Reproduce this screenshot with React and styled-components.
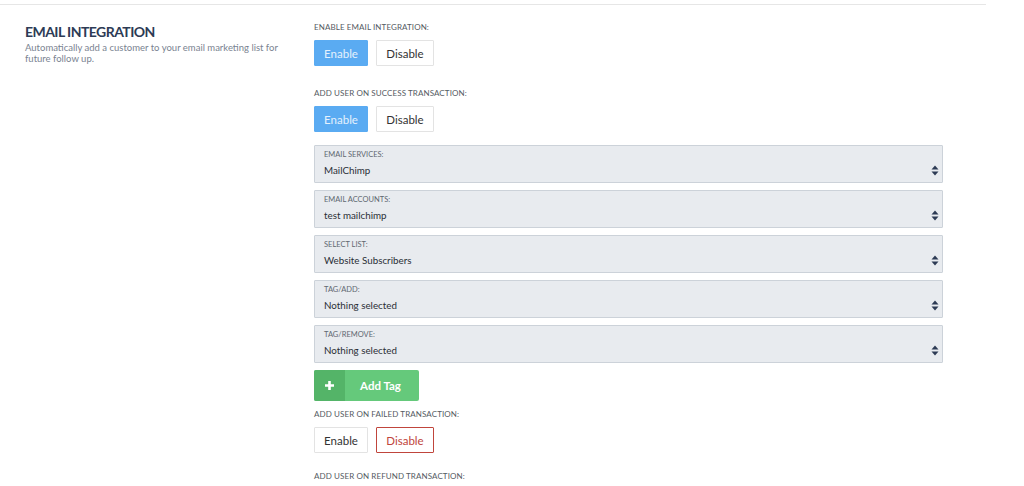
import React from "react";
import styled, { createGlobalStyle } from "styled-components";

const Global = createGlobalStyle`
  html, body { margin: 0; padding: 0; background: #fff; }
  body { font-family: "Lato", "Open Sans", sans-serif; color: #333; }
  * { box-sizing: border-box; }
`;

const Page = styled.div`
  width: 1024px;
  height: 486px;
  overflow: hidden;
`;

const TopRule = styled.div`
  width: 986px;
  height: 5px;
  border-bottom: 1px solid #e6e6e6;
`;

const Section = styled.div`
  display: flex;
  padding-left: 25px;
`;

const Intro = styled.div`
  width: 289px;
  padding-top: 19px;
  padding-right: 22px;
`;

const Title = styled.h2`
  margin: 0;
  font-size: 14px;
  font-weight: 700;
  color: #2d3b55;
  letter-spacing: -0.55px;
  line-height: 16px;
`;

const Desc = styled.p`
  margin: 2px 0 0;
  font-size: 9.5px;
  line-height: 11px;
  color: #7a8391;
`;

const Form = styled.div`
  width: 629px;
  display: flex;
  flex-direction: column;
  padding-top: 17px;
`;

const FieldLabel = styled.div`
  font-size: 8px;
  line-height: 10px;
  text-transform: uppercase;
  color: #555b63;
  letter-spacing: 0.1px;
  margin-bottom: 8px;
`;

const ToggleRow = styled.div`
  display: flex;
  gap: 8px;
  margin-bottom: ${(p) => p.$mb}px;
`;

const ToggleBtn = styled.button`
  height: 26px;
  padding: 0;
  width: ${(p) => p.$w}px;
  font-family: inherit;
  font-size: 11.5px;
  border-radius: 1px;
  cursor: pointer;
  background: ${(p) => (p.$active === "on" ? "#5aabf2" : "#fff")};
  color: ${(p) =>
    p.$active === "on" ? "#e4f1fd" : p.$active === "off" ? "#c0453c" : "#333"};
  border: ${(p) => (p.$active === "off" ? "1.5px" : "1px")} solid
    ${(p) =>
      p.$active === "on"
        ? "#5aabf2"
        : p.$active === "off"
        ? "#c0453c"
        : "#e3e3e3"};
`;

const Selects = styled.div`
  display: flex;
  flex-direction: column;
  gap: 7px;
  margin-top: -9px;
  margin-bottom: 7px;
`;

const SelectBox = styled.div`
  position: relative;
  height: 38px;
  background: #e8ebef;
  border: 1px solid #ccd2d9;
  border-radius: 1px;
  padding: 4px 9px 0;
`;

const SelectLabel = styled.div`
  font-size: 7.5px;
  line-height: 10px;
  text-transform: uppercase;
  color: #606770;
`;

const SelectValue = styled.div`
  font-size: 9.8px;
  line-height: 12px;
  margin-top: 4px;
  color: #2a2f36;
`;

const Caret = styled.svg`
  position: absolute;
  right: 3px;
  top: 19px;
`;

const AddTag = styled.button`
  display: flex;
  width: 105px;
  height: 31px;
  padding: 0;
  border: none;
  border-radius: 2px;
  overflow: hidden;
  background: #65c97b;
  cursor: pointer;
  font-family: inherit;
  margin-bottom: 8px;
`;

const AddIcon = styled.span`
  width: 31px;
  height: 100%;
  background: #54b468;
  display: flex;
  align-items: center;
  justify-content: center;
`;

const AddText = styled.span`
  flex: 1;
  display: flex;
  align-items: center;
  justify-content: center;
  color: #fff;
  font-size: 11.5px;
  font-weight: 700;
  padding-right: 3px;
`;

const Toggle = ({ value, mb = 22 }) => (
  <ToggleRow $mb={mb}>
    <ToggleBtn $w={54} $active={value === "enable" ? "on" : ""}>
      Enable
    </ToggleBtn>
    <ToggleBtn $w={58} $active={value === "disable" ? "off" : ""}>
      Disable
    </ToggleBtn>
  </ToggleRow>
);

const Select = ({ label, value }) => (
  <SelectBox>
    <SelectLabel>{label}</SelectLabel>
    <SelectValue>{value}</SelectValue>
    <Caret width="8" height="11" viewBox="0 0 8 11">
      <path d="M4 0.5 L7.5 4.5 H0.5 Z" fill="#2d3b55" />
      <path d="M4 10.5 L7.5 6.5 H0.5 Z" fill="#2d3b55" />
    </Caret>
  </SelectBox>
);

export default function App() {
  return (
    <Page>
      <Global />
      <TopRule />
      <Section>
        <Intro>
          <Title>EMAIL INTEGRATION</Title>
          <Desc>
            Automatically add a customer to your email marketing list for
            future follow up.
          </Desc>
        </Intro>
        <Form>
          <FieldLabel>Enable Email Integration:</FieldLabel>
          <Toggle value="enable" />
          <FieldLabel>Add User on Success Transaction:</FieldLabel>
          <Toggle value="enable" />
          <Selects>
            <Select label="Email Services:" value="MailChimp" />
            <Select label="Email Accounts:" value="test mailchimp" />
            <Select label="Select List:" value="Website Subscribers" />
            <Select label="Tag/Add:" value="Nothing selected" />
            <Select label="Tag/Remove:" value="Nothing selected" />
          </Selects>
          <AddTag>
            <AddIcon>
              <svg width="11" height="11" viewBox="0 0 11 11">
                <path d="M5.5 1 V10 M1 5.5 H10" stroke="#fff" strokeWidth="2.6" />
              </svg>
            </AddIcon>
            <AddText>Add Tag</AddText>
          </AddTag>
          <FieldLabel>Add User on Failed Transaction:</FieldLabel>
          <Toggle value="disable" mb={18} />
          <FieldLabel>Add User on Refund Transaction:</FieldLabel>
        </Form>
      </Section>
    </Page>
  );
}
